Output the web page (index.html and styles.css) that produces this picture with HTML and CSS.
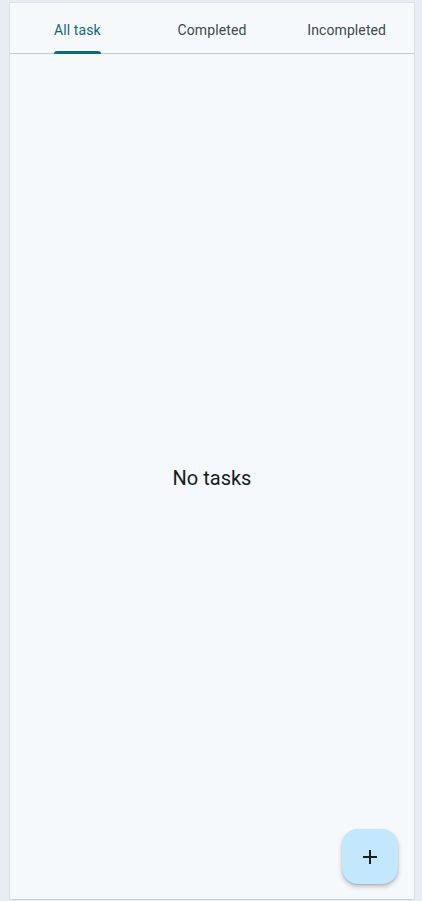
FILE: index.html
```html
<!DOCTYPE html>
<html>
<head>
<meta charset="utf-8">
<link rel="stylesheet" href="styles.css">
</head>
<body>
<div class="screen">
  <nav class="tabs">
    <div class="tab active"><span class="label">All task<span class="indicator"></span></span></div>
    <div class="tab"><span class="label">Completed</span></div>
    <div class="tab"><span class="label">Incompleted</span></div>
  </nav>
  <main class="content">
    <p class="empty">No tasks</p>
  </main>
  <button class="fab" aria-label="Add task">
    <svg width="24" height="24" viewBox="0 0 24 24"><path d="M19 13h-6v6h-2v-6H5v-2h6V5h2v6h6v2z" fill="#1b1f22"/></svg>
  </button>
</div>
</body>
</html>
```
FILE: styles.css
```css
html, body {
  margin: 0;
  height: 100%;
}
body {
  background: #e8ecf3;
  padding: 3px 8px 2px 10px;
  box-sizing: border-box;
  font-family: Roboto, "Noto Sans", sans-serif;
}
.screen {
  position: relative;
  height: 896px;
  background: #f5f9fc;
  box-shadow: 0 1px 1px rgba(0,0,0,0.08), 0 0 0 1px rgba(200,205,212,0.35);
  display: flex;
  flex-direction: column;
}
.tabs {
  display: flex;
  height: 51px;
  box-sizing: border-box;
  padding-top: 3px;
  border-bottom: 1px solid #c4c9cc;
}
.tab {
  flex: 1;
  display: flex;
  justify-content: center;
  align-items: stretch;
  font-size: 14px;
  color: #40484c;
  letter-spacing: 0.1px;
}
.label {
  position: relative;
  display: flex;
  align-items: center;
}
.tab.active { color: #176780; }
.indicator {
  position: absolute;
  left: 0;
  right: 0;
  bottom: -1px;
  height: 3px;
  background: #0f6680;
  border-radius: 3px 3px 0 0;
}
.content {
  flex: 1;
  display: flex;
  align-items: center;
  justify-content: center;
  padding-top: 2px;
}
.empty {
  margin: 0;
  font-size: 20px;
  color: #171c1f;
}
.fab {
  position: absolute;
  right: 16px;
  bottom: 15px;
  width: 56px;
  height: 55px;
  border: none;
  border-radius: 16px;
  background: #c3e8fe;
  box-shadow: 0 3px 5px rgba(0,0,0,0.2), 0 1px 2px rgba(0,0,0,0.15);
  display: flex;
  align-items: center;
  justify-content: center;
  padding: 0;
}
```
